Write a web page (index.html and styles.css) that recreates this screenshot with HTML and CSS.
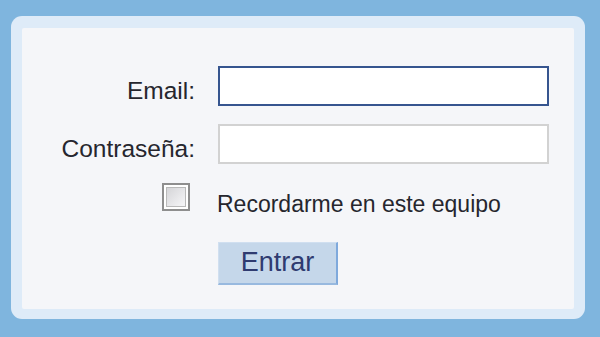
FILE: index.html
```html
<!DOCTYPE html>
<html lang="es">
<head>
<meta charset="utf-8">
<title>Login</title>
<link rel="stylesheet" href="styles.css">
</head>
<body>
<div class="outer">
  <form class="inner">
    <div class="grid">
      <label class="lbl" for="email">Email:</label>
      <input class="field field-active" id="email" type="text">
      <label class="lbl" for="pass">Contraseña:</label>
      <input class="field" id="pass" type="password">
      <input class="chk" id="rem" type="checkbox">
      <label class="rem" for="rem">Recordarme en este equipo</label>
      <span></span>
      <button class="btn" type="button">Entrar</button>
    </div>
  </form>
</div>
</body>
</html>
```

FILE: styles.css
```css
html, body {
  margin: 0;
  padding: 0;
}
body {
  background: #7fb5de;
  width: 600px;
  height: 337px;
  overflow: hidden;
  font-family: "Liberation Sans", Arial, sans-serif;
  color: #26262e;
}
.outer {
  margin: 16px 15px 0 11px;
  height: 303px;
  box-sizing: border-box;
  background: #deebf8;
  border-radius: 11px;
  padding: 12px 11px 10px 11px;
}
.inner {
  display: block;
  margin: 0;
  height: 281px;
  background: #f5f6f9;
  border-radius: 2px;
  box-sizing: border-box;
  padding-top: 38px;
}
.grid {
  display: grid;
  grid-template-columns: 173px 331px;
  column-gap: 23px;
  row-gap: 18px;
  grid-template-rows: 40px 40px auto auto;
}
.lbl {
  text-align: right;
  font-size: 24.5px;
  line-height: 40px;
  padding-top: 5px;
  height: 40px;
  box-sizing: border-box;
}
.field {
  margin: 0;
  width: 331px;
  height: 40px;
  box-sizing: border-box;
  border: 2px solid #d2d2d2;
  background: #fff;
  outline: none;
  padding: 0 6px;
  font-size: 20px;
}
.field-active {
  border-color: #36558f;
}
.chk {
  -webkit-appearance: none;
  appearance: none;
  justify-self: end;
  margin: 1px 5px 0 0;
  width: 28px;
  height: 28px;
  box-sizing: border-box;
  border: 2px solid #8e8e8e;
  background: #ffffff;
  box-shadow: inset 0 0 0 2px #fff, inset 0 0 0 3px #b9b9b9;
  background-image: linear-gradient(135deg, #cfcfd2 0%, #f3f3f5 80%);
  background-clip: content-box;
  padding: 3px;
}
.rem {
  font-size: 23px;
  line-height: 28px;
  padding-top: 8px;
  margin-left: -1px;
}
.btn {
  margin: 6px 0 0 0;
  justify-self: start;
  width: 120px;
  height: 43px;
  box-sizing: border-box;
  background: #c5d7ea;
  border: 0;
  border-right: 2px solid #7fa9dc;
  border-bottom: 2px solid #98b9df;
  border-top: 1px solid #d0dff0;
  border-left: 1px solid #d0dff0;
  font-family: "Liberation Sans", Arial, sans-serif;
  font-size: 27px;
  color: #2f3b70;
  padding: 0 0 2px 0;
}
```
